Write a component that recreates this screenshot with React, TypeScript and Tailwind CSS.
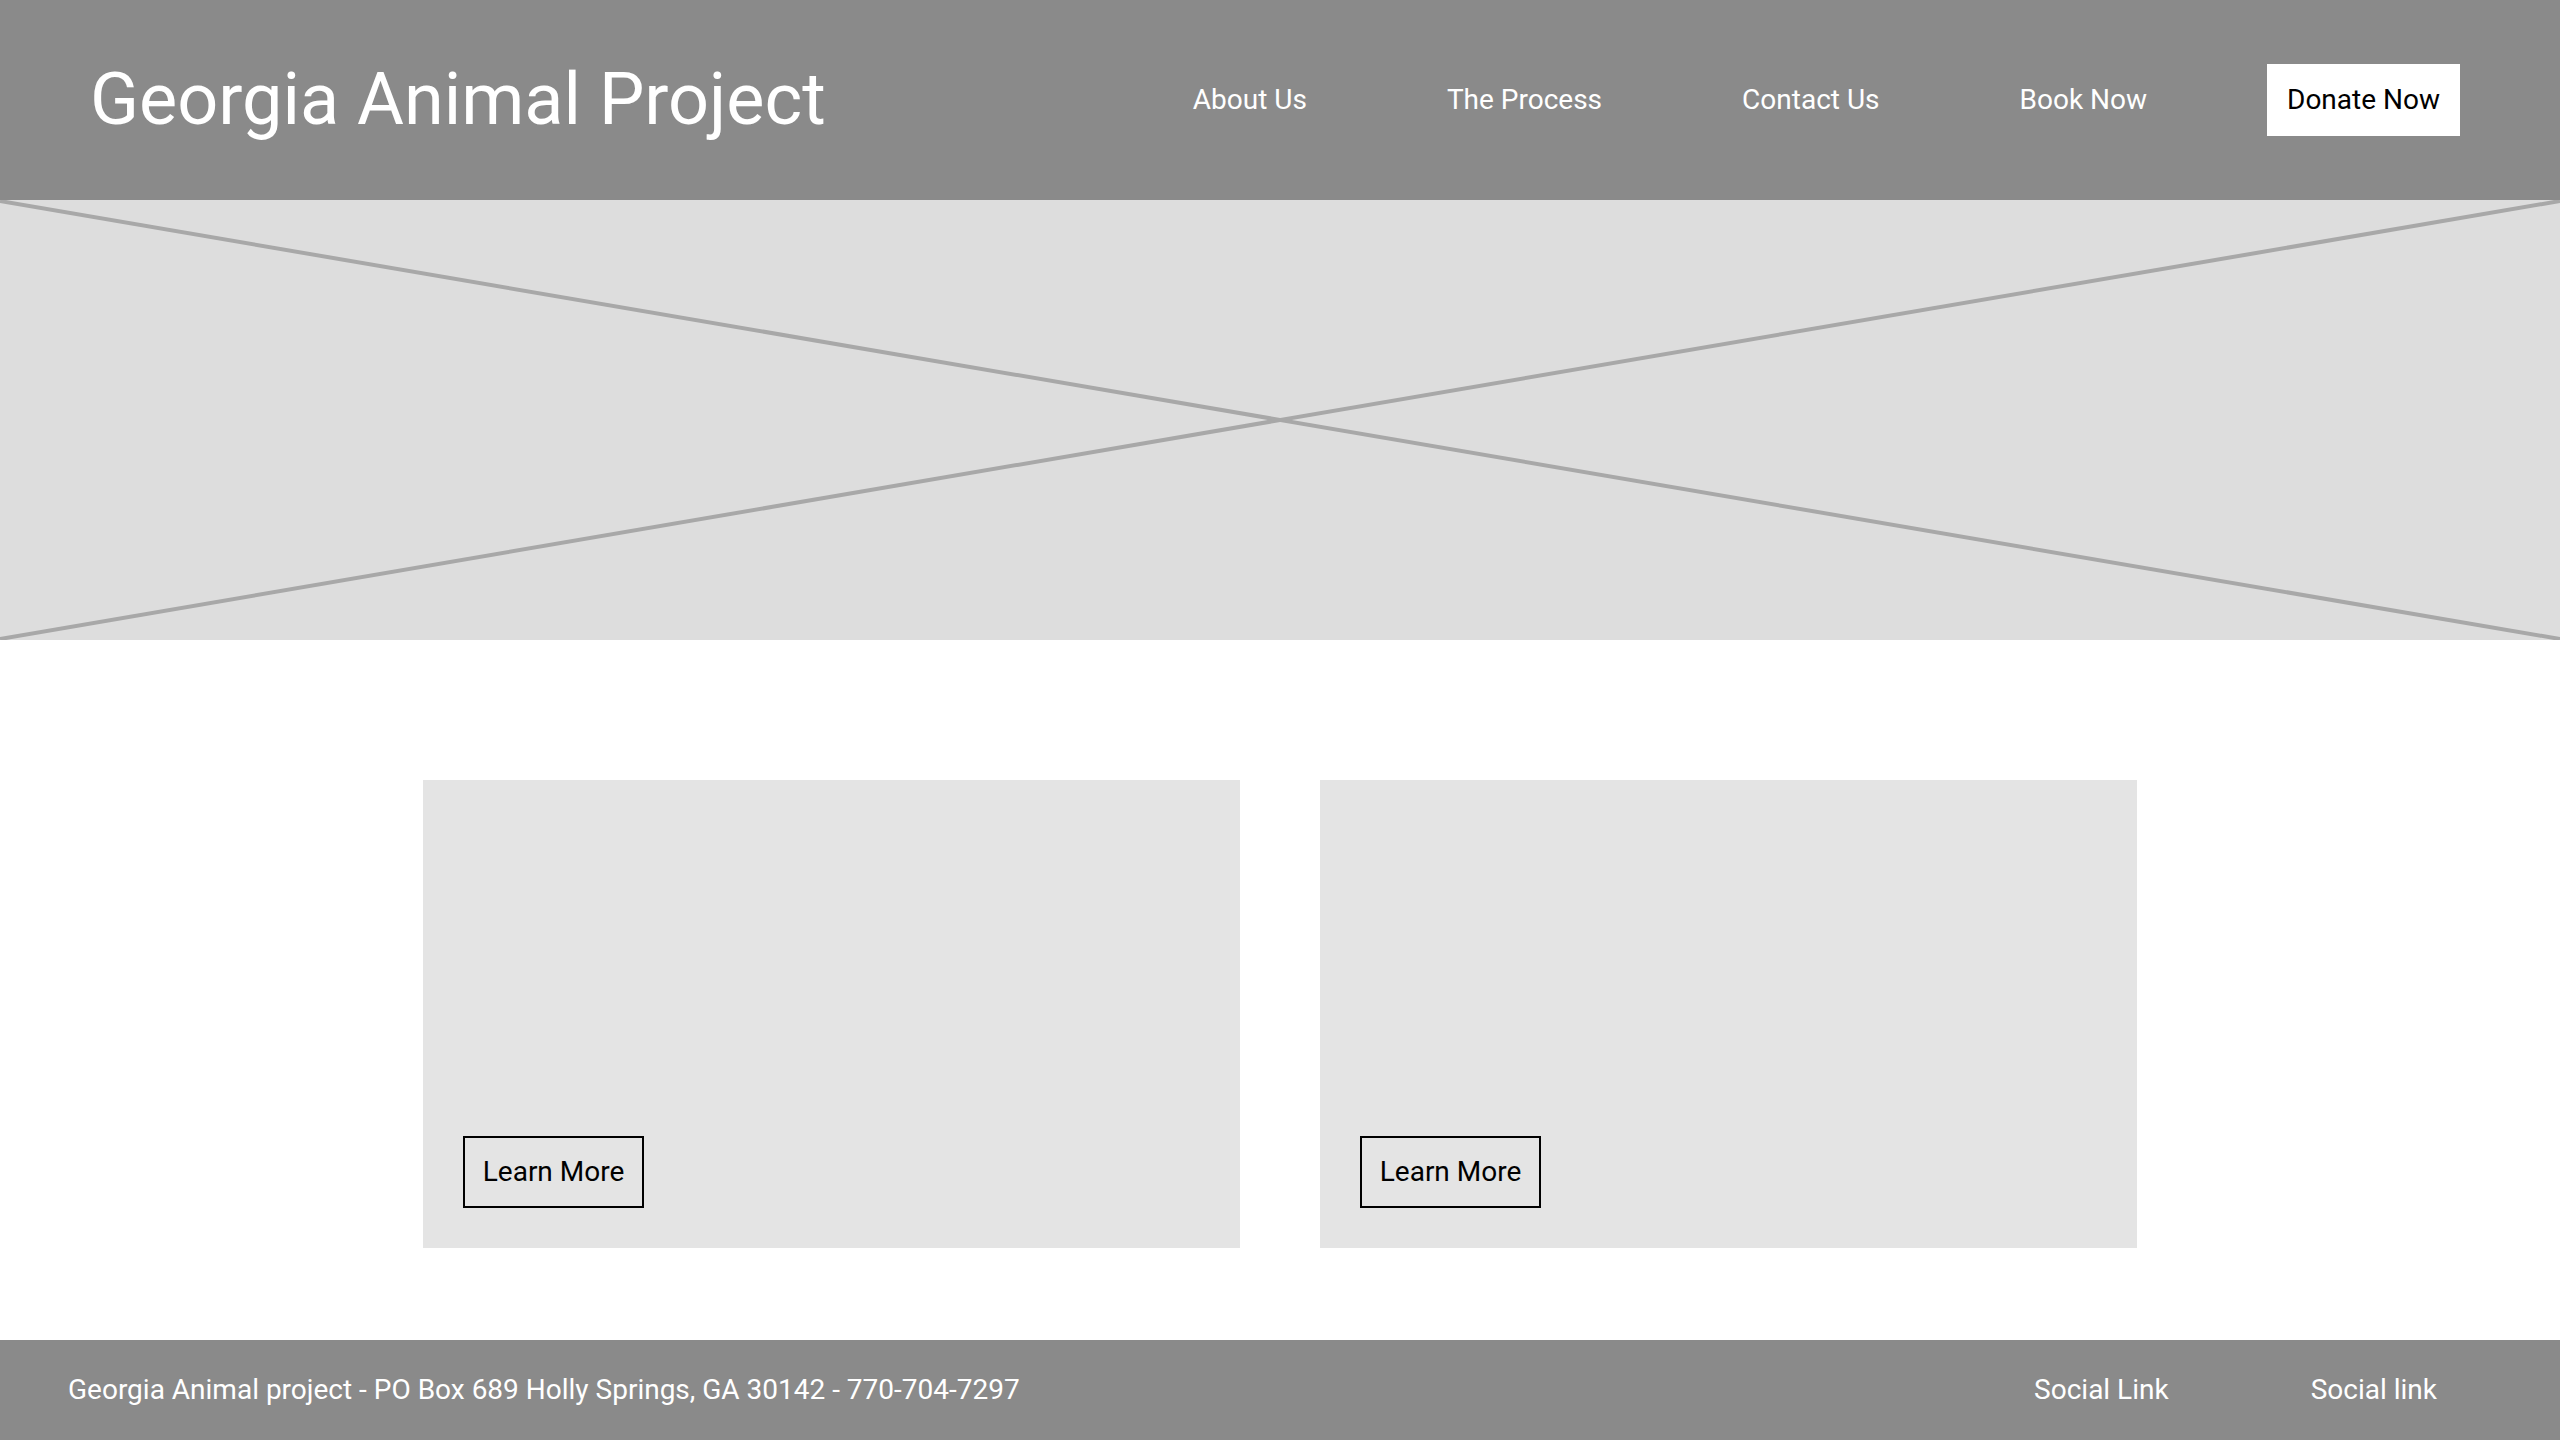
export default function App() {
  const nav = ["About Us", "The Process", "Contact Us", "Book Now"];
  return (
    <div className="w-[2560px] h-[1440px] flex flex-col bg-white font-['Roboto',sans-serif]">
      <header className="h-[200px] shrink-0 bg-[#8a8a8a] flex items-center justify-between pl-[90px] pr-[100px]">
        <h1 className="text-[72px] leading-none text-white font-normal">Georgia Animal Project</h1>
        <nav className="flex items-center gap-[100px]">
          {nav.map((n) => (
            <a key={n} className="px-[20px] text-[28px] leading-[72px] text-white">
              {n}
            </a>
          ))}
          <a className="px-[20px] h-[72px] flex items-center bg-white text-[28px] text-black">Donate Now</a>
        </nav>
      </header>
      <section className="h-[440px] shrink-0 bg-[#dddddd]">
        <svg className="w-full h-full block" viewBox="0 0 2560 440" preserveAspectRatio="none">
          <line x1="0" y1="1" x2="2560" y2="439" stroke="#a8a8a8" strokeWidth="4" />
          <line x1="0" y1="439" x2="2560" y2="1" stroke="#a8a8a8" strokeWidth="4" />
        </svg>
      </section>
      <main className="flex-1 flex justify-center gap-[80px] pt-[140px] pb-[92px]">
        {[0, 1].map((i) => (
          <div key={i} className="w-[817px] h-[468px] bg-[#e4e4e4] p-[40px] flex items-end">
            <button className="h-[72px] w-[181px] border-2 border-black text-[28px] text-black flex items-center justify-center">
              Learn More
            </button>
          </div>
        ))}
      </main>
      <footer className="h-[100px] shrink-0 bg-[#8a8a8a] flex items-center justify-between pl-[68px] pr-[123px] text-white text-[28px]">
        <span>Georgia Animal project - PO Box 689 Holly Springs, GA 30142 - 770-704-7297</span>
        <div className="flex gap-[142px]">
          <span>Social Link</span>
          <span>Social link</span>
        </div>
      </footer>
    </div>
  );
}
